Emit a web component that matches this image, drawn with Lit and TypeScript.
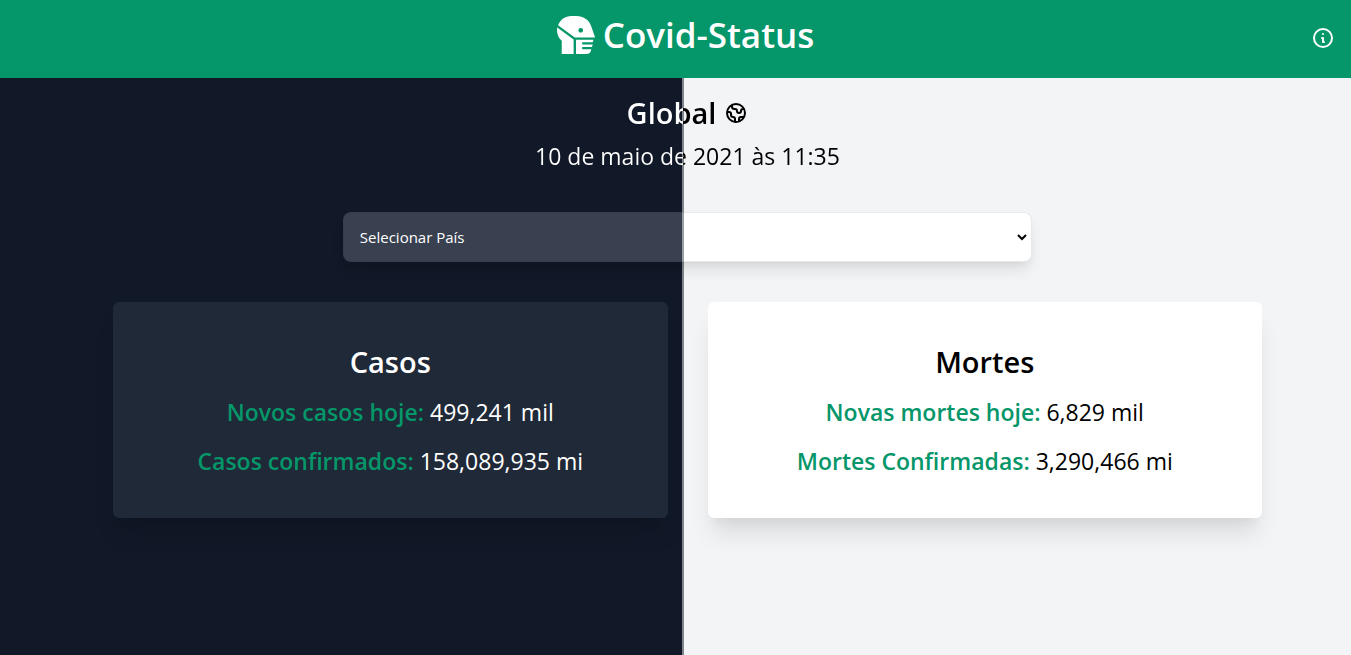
import { LitElement, html, css, svg } from "lit";
import { customElement, property } from "lit/decorators.js";

interface Stat {
  label: string;
  value: string;
}

const maskIcon = svg`
  <path d="M.15 184.42C-2.17 244.21 23 298.06 64 334.88V512h160V316.51L3.67 156.25a182.28 182.28 0 0 0-3.52 28.17z"/>
  <path fill-rule="evenodd" d="M509.22 275c-21-47.11-48.5-151.75-73.12-186.75A208.11 208.11 0 0 0 266.11 0H192C112 0 42.5 49.5 14.5 124.6L239.2 288h272.2a31.6 31.6 0 0 0-2.18-13zM320 224a32 32 0 1 1 32-32 32 32 0 0 1-32 32z"/>
  <path d="M336 368a16 16 0 0 1 16-16h129.21l10.67-32H256v192h140.79a64 64 0 0 0 60.71-43.76L460.54 448H352a16 16 0 0 1 0-32h119.21l10.67-32H352a16 16 0 0 1-16-16z"/>
`;

@customElement("stat-card")
export class StatCard extends LitElement {
  @property() heading = "";
  @property({ attribute: false }) stats: Stat[] = [];

  static styles = css`
    :host {
      display: block;
      padding: 40px 16px 32px;
      border-radius: 6px;
      text-align: center;
      color: #000;
      background: #fff;
      box-shadow: 0 20px 25px -5px rgba(0, 0, 0, 0.1), 0 10px 10px -5px rgba(0, 0, 0, 0.04);
    }
    :host([dark]) {
      color: #fff;
      background: #1f2937;
    }
    h2 {
      margin: 0 0 6px;
      font-size: 29px;
      line-height: 40px;
      font-weight: 600;
    }
    p {
      margin: 0;
      font-size: 23px;
      line-height: 49px;
    }
    .label {
      color: #059669;
      font-weight: 600;
    }
  `;

  render() {
    return html`
      <h2>${this.heading}</h2>
      ${this.stats.map((s) => html`<p><span class="label">${s.label}</span> ${s.value}</p>`)}
    `;
  }
}

@customElement("app-root")
export class AppRoot extends LitElement {
  static styles = css`
    :host {
      --split: 683px;
      display: flex;
      flex-direction: column;
      min-height: 100vh;
      font-family: "Open Sans", "Noto Sans", sans-serif;
      background: linear-gradient(
        to right,
        #111827 calc(var(--split) - 1px),
        #80848c calc(var(--split) - 1px),
        #80848c calc(var(--split) + 1px),
        #f3f4f6 calc(var(--split) + 1px)
      );
    }
    header {
      display: grid;
      grid-template-columns: 1fr auto 1fr;
      align-items: center;
      box-sizing: border-box;
      height: 78px;
      padding: 0 16px 0 36px;
      color: #fff;
      background: #059669;
    }
    .brand {
      grid-column: 2;
      display: flex;
      align-items: center;
      gap: 8px;
      padding-bottom: 8px;
    }
    .brand svg {
      width: 38px;
      height: 38px;
      fill: currentColor;
    }
    h1 {
      margin: 0;
      font-size: 35px;
      line-height: 48px;
      font-weight: 600;
    }
    .info {
      justify-self: end;
      display: flex;
      padding: 0 0 2px;
      border: 0;
      color: inherit;
      background: none;
      cursor: pointer;
    }
    .line {
      width: 24px;
      height: 24px;
      fill: none;
      stroke: currentColor;
      stroke-width: 2;
      stroke-linecap: round;
      stroke-linejoin: round;
    }
    main {
      padding: 15px 89px 40px 113px;
    }
    .title {
      display: flex;
      justify-content: center;
      align-items: center;
      gap: 8px;
    }
    .title .line {
      color: #000;
    }
    .title h2,
    .date {
      margin: 0;
      color: transparent;
      background: linear-gradient(to right, #fff var(--split), #000 var(--split)) fixed;
      -webkit-background-clip: text;
      background-clip: text;
    }
    .title h2 {
      font-size: 29px;
      line-height: 40px;
      font-weight: 600;
    }
    .date {
      font-size: 23px;
      line-height: 46px;
      text-align: center;
    }
    .picker {
      display: grid;
      align-items: center;
      width: 60%;
      margin: 33px auto 40px;
    }
    .picker > * {
      grid-area: 1 / 1;
    }
    select {
      appearance: none;
      box-sizing: border-box;
      width: 100%;
      height: 50px;
      padding: 0 16px;
      border: 1px solid rgba(31, 41, 55, 0.1);
      border-radius: 8px;
      font: 15px "Open Sans", "Noto Sans", sans-serif;
      color: #fff;
      background: linear-gradient(
          to right,
          #394150 calc(var(--split) - 1px),
          #9a9ea5 calc(var(--split) - 1px),
          #9a9ea5 calc(var(--split) + 1px),
          #fff calc(var(--split) + 1px)
        )
        fixed;
      box-shadow: 0 10px 15px -3px rgba(0, 0, 0, 0.1), 0 4px 6px -2px rgba(0, 0, 0, 0.05);
    }
    option {
      color: #000;
    }
    .chevron {
      justify-self: end;
      width: 10px;
      height: 10px;
      margin-right: 5px;
      fill: none;
      stroke: #000;
      stroke-width: 2;
      pointer-events: none;
    }
    .cards {
      display: grid;
      grid-template-columns: 1fr 1fr;
      gap: 40px;
    }
  `;

  private cases: Stat[] = [
    { label: "Novos casos hoje:", value: "499,241 mil" },
    { label: "Casos confirmados:", value: "158,089,935 mi" },
  ];

  private deaths: Stat[] = [
    { label: "Novas mortes hoje:", value: "6,829 mil" },
    { label: "Mortes Confirmadas:", value: "3,290,466 mi" },
  ];

  render() {
    return html`
      <header>
        <div class="brand">
          <svg viewBox="0 0 512 512" aria-hidden="true">${maskIcon}</svg>
          <h1>Covid-Status</h1>
        </div>
        <button class="info" aria-label="Info">
          <svg class="line" viewBox="0 0 24 24">
            <path d="M13 16h-1v-4h-1m1-4h.01M21 12a9 9 0 11-18 0 9 9 0 0118 0z" />
          </svg>
        </button>
      </header>
      <main>
        <div class="title">
          <h2>Global</h2>
          <svg class="line" viewBox="0 0 24 24" aria-hidden="true">
            <path d="M3.055 11H5a2 2 0 012 2v1a2 2 0 002 2 2 2 0 012 2v2.945M8 3.935V5.5A2.5 2.5 0 0010.5 8h.5a2 2 0 012 2 2 2 0 104 0 2 2 0 012-2h1.064M15 20.488V18a2 2 0 012-2h3.064M21 12a9 9 0 11-18 0 9 9 0 0118 0z" />
          </svg>
        </div>
        <p class="date">10 de maio de 2021 às 11:35</p>
        <div class="picker">
          <select aria-label="Selecionar País">
            <option>Selecionar País</option>
          </select>
          <svg class="chevron" viewBox="0 0 10 10" aria-hidden="true"><path d="M1 3l4 4 4-4" /></svg>
        </div>
        <div class="cards">
          <stat-card dark heading="Casos" .stats=${this.cases}></stat-card>
          <stat-card heading="Mortes" .stats=${this.deaths}></stat-card>
        </div>
      </main>
    `;
  }
}
